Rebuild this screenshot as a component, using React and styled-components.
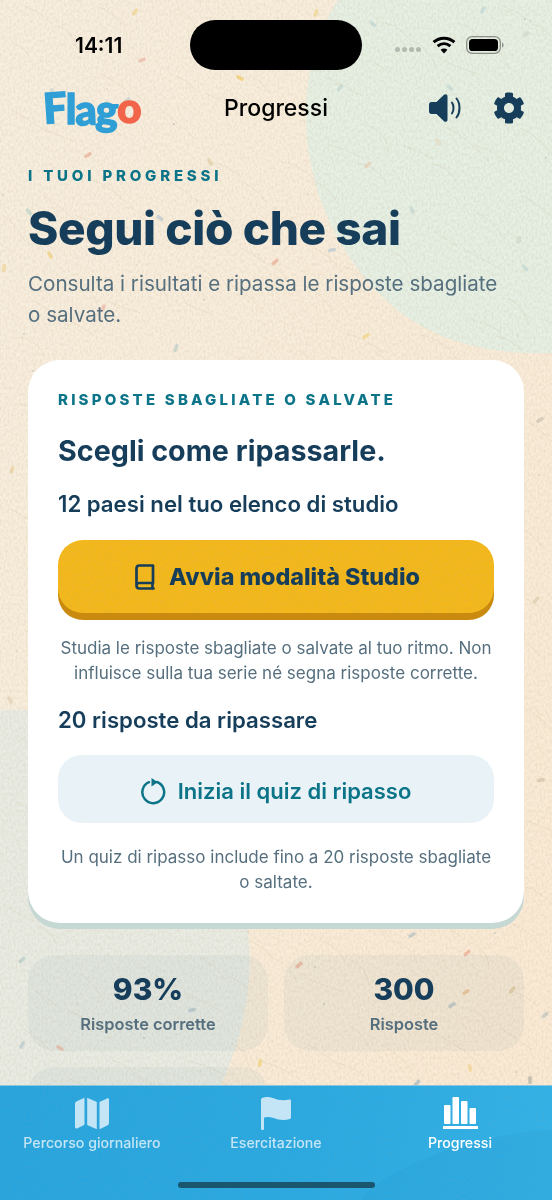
import React from 'react';
import styled, { createGlobalStyle } from 'styled-components';
import { FaCog } from 'react-icons/fa';

const GlobalStyle = createGlobalStyle`
  html, body {
    margin: 0;
    padding: 0;
    background: #f7e8d4;
  }
  * {
    box-sizing: border-box;
  }
`;

const navy = '#163d5a';
const teal = '#0c7488';
const slate = '#566f7e';

const Screen = styled.div`
  position: relative;
  width: 552px;
  height: 1200px;
  overflow: hidden;
  display: flex;
  flex-direction: column;
  font-family: Inter, 'Liberation Sans', sans-serif;
  color: ${navy};
`;

const PaperLayer = styled.svg`
  position: absolute;
  left: 0;
  top: 0;
  width: 552px;
  height: 1200px;
`;

const GrainOverlay = styled.svg`
  position: absolute;
  inset: 0;
  width: 100%;
  height: 100%;
  pointer-events: none;
`;

const StatusBar = styled.div`
  position: relative;
  height: 80px;
  flex: none;
  display: flex;
  align-items: center;
  justify-content: space-between;
  padding: 10px 48px 0 75px;
`;

const Clock = styled.span`
  font-size: 21px;
  font-weight: 600;
  color: #000;
`;

const Island = styled.div`
  position: absolute;
  left: 190px;
  top: 20px;
  width: 172px;
  height: 50px;
  border-radius: 25px;
  background: #000;
`;

const StatusIcons = styled.div`
  display: flex;
  align-items: center;
  gap: 10px;
`;

const SignalDots = styled.div`
  display: flex;
  gap: 2px;
  margin: 8px 1px 0 0;
`;

const Dot = styled.i`
  display: block;
  width: 5px;
  height: 5px;
  border-radius: 50%;
  background: #b4b9b0;
`;

const NavBar = styled.header`
  position: relative;
  flex: none;
  height: 56px;
  display: grid;
  grid-template-columns: 1fr auto 1fr;
  align-items: center;
  padding: 0 27px;
`;

const Logo = styled.div`
  display: flex;
  align-items: baseline;
  margin: -3px 0 0 16px;
  font-family: Lato, Inter, sans-serif;
  font-size: 42px;
  font-weight: 900;
  line-height: 1;
  letter-spacing: -1px;
  color: #2f9fd6;
  -webkit-text-stroke: 1.4px currentColor;
`;

const LogoLetter = styled.span`
  display: inline-block;
  color: ${p => p.$accent ? '#f2654a' : '#2f9fd6'};
  transform: translateY(${p => p.$lift || 0}px) rotate(${p => p.$tilt || 0}deg);
`;

const NavTitle = styled.h2`
  margin: 0;
  font-size: 23px;
  font-weight: 500;
  color: #000;
`;

const NavActions = styled.div`
  display: flex;
  align-items: center;
  justify-content: flex-end;
  gap: 31px;
  color: ${navy};
`;

const Content = styled.main`
  position: relative;
  flex: 1;
  min-height: 0;
  overflow: hidden;
  padding: 0 28px;
`;

const Eyebrow = styled.div`
  font-size: 15px;
  line-height: 18px;
  font-weight: 800;
  letter-spacing: ${p => p.$spacing}px;
  text-transform: uppercase;
  color: ${teal};
`;

const Intro = styled.section`
  padding-top: 31px;
`;

const Headline = styled.h1`
  margin: 14px 0 0;
  font-size: 46px;
  line-height: 58px;
  font-weight: 800;
  letter-spacing: -0.4px;
`;

const Lead = styled.p`
  margin: 11px 0 0;
  padding-right: 10px;
  font-size: 20.6px;
  line-height: 31px;
  color: ${slate};
`;

const Card = styled.section`
  margin-top: 30px;
  padding: 31px 30px 28px;
  border-radius: 32px;
  background: #fff;
  box-shadow: 0 6px 0 #c6d8d3;
`;

const CardTitle = styled.h3`
  margin: 24px 0 0;
  font-size: 28.7px;
  line-height: 36px;
  font-weight: 700;
`;

const CountLine = styled.div`
  margin-top: ${p => p.$top}px;
  font-size: 22.2px;
  line-height: 30px;
  font-weight: 600;
`;

const ActionButton = styled.button`
  position: relative;
  width: 100%;
  display: flex;
  align-items: center;
  justify-content: center;
  gap: ${p => p.$primary ? 14 : 12}px;
  margin-top: ${p => p.$primary ? 21 : 20}px;
  padding: ${p => p.$primary ? '0 0 0 3px' : '3px 0 0'};
  height: ${p => p.$primary ? 73 : 68}px;
  border: 0;
  border-radius: ${p => p.$primary ? 25 : 24}px;
  font-family: inherit;
  font-size: ${p => p.$primary ? 23.3 : 22}px;
  font-weight: ${p => p.$primary ? 800 : 600};
  color: ${p => p.$primary ? navy : teal};
  background: ${p => p.$primary ? '#f4b81a' : '#e9f2f6'};
  box-shadow: ${p => p.$primary ? '0 7px 0 #c98a0f' : 'none'};
`;

const ButtonTexture = styled.span`
  position: absolute;
  inset: 0;
  overflow: hidden;
  border-radius: 25px;
`;

const ButtonLabel = styled.span`
  position: relative;
`;

const HelpText = styled.p`
  margin: ${p => p.$top}px 0 0;
  font-size: 17px;
  line-height: 25px;
  text-align: center;
  color: ${slate};
`;

const StatGrid = styled.div`
  display: grid;
  grid-template-columns: 1fr 1fr;
  gap: 16px;
  margin-top: 32px;
`;

const StatCard = styled.div`
  height: 96px;
  padding-top: 15px;
  border-radius: 26px;
  text-align: center;
  background: rgba(70, 120, 135, 0.06);
`;

const StatValue = styled.div`
  font-size: 30px;
  line-height: 38px;
  font-weight: 800;
`;

const StatLabel = styled.div`
  margin-top: 6px;
  font-size: 16.4px;
  line-height: 20px;
  font-weight: 600;
  color: ${slate};
`;

const TabBar = styled.nav`
  position: relative;
  flex: none;
  height: 115px;
  overflow: hidden;
  border-top: 1px solid #8cc6dc;
  background: linear-gradient(100deg, #28a4dd 0%, #2aa8e0 55%, #33b1e6 100%);
`;

const TabWash = styled.svg`
  position: absolute;
  inset: 0;
  width: 100%;
  height: 100%;
`;

const TabRow = styled.div`
  position: relative;
  display: grid;
  grid-template-columns: 184px 184px 184px;
  padding-top: 10px;
`;

const Tab = styled.div`
  display: flex;
  flex-direction: column;
  align-items: center;
  gap: 4px;
  color: ${p => p.$active ? '#fff' : '#c4e5f5'};
  font-size: 14.2px;
  line-height: 18px;
  font-weight: 500;
`;

const TabIcon = styled.div`
  height: 34px;
  display: flex;
  align-items: center;
`;

const HomeIndicator = styled.div`
  position: absolute;
  left: 178px;
  bottom: 12px;
  width: 197px;
  height: 6px;
  border-radius: 3px;
  background: #1b566f;
`;

const BookSvg = styled.svg`
  position: relative;
`;

// paper flecks, picked by eye from the reference
const flecks = [
  [135, 12, '#f0cf78', 40], [142, 60, '#eba89a', 70], [240, 78, '#f2c542', -60], [316, 13, '#f0cf78', 20],
  [373, 24, '#b9d3d6', -50], [483, 10, '#b9d3d6', 30], [526, 34, '#c5d5c8', 60], [450, 88, '#b9d3d6', -55],
  [340, 88, '#b9d3d6', 45], [52, 92, '#b8cfd2', 0], [127, 100, '#b8c8cc', 60], [438, 142, '#e8d8b8', -40],
  [368, 165, '#ecc9a8', 50], [88, 155, '#ec9b80', 60], [210, 162, '#dcc898', -30], [29, 212, '#a8ccc4', -40],
  [160, 218, '#a8bfd0', -55], [50, 255, '#f0c860', -30], [275, 262, '#ec9b80', 50], [4, 268, '#f0d080', 10],
  [103, 308, '#eba89a', 30], [366, 336, '#f2d466', 60], [332, 250, '#a8bfd0', 80], [525, 268, '#b8d4d0', -40],
  [176, 348, '#a8c8c8', 20], [412, 210, '#b8d4d0', -20], [519, 240, '#c8d8c8', 10], [470, 285, '#ccd8c0', -20],
  [540, 420, '#c0b8a8', 60], [12, 470, '#e8c890', 20], [536, 600, '#d8c8a8', 40], [10, 700, '#d8c8a8', -30],
  [541, 780, '#c8b8a0', 80], [22, 960, '#a8c4c4', 50], [60, 1048, '#f0a888', -60], [22, 1045, '#a8c0cc', 30],
  [299, 965, '#e89878', 50], [412, 935, '#9fb3c0', 60], [467, 953, '#ec9b80', 50], [192, 1010, '#9fb8c8', 80],
  [466, 992, '#e8b070', 60], [545, 1015, '#b0bcc0', 50], [260, 1063, '#f2cf60', 10], [470, 1068, '#f2cf80', -10],
  [417, 1083, '#8fa8b8', 40], [530, 1080, '#98a098', 0], [512, 990, '#d8b888', 40], [452, 1005, '#98b0c0', 60],
];

const speckDots = Array.from({ length: 80 }, (_, i) => [
  (i * 97 + 31) % 552,
  (i * 211 + 17) % 1090,
  0.4 + (i % 3) * 0.25,
]);

const fibres = Array.from({ length: 240 }, (_, i) => {
  const x = (i * 139 + 11) % 552;
  const y = (i * 173 + 43) % 1090;
  return `M${x} ${y}q${10 + i % 9} ${2 + i % 7} ${18 + i % 20} ${12 + i % 16}`;
});

function PaperBackground() {
  return (
    <PaperLayer viewBox="0 0 552 1200" aria-hidden="true">
      <defs>
        <filter id="grain" x="0" y="0" width="100%" height="100%">
          <feTurbulence type="fractalNoise" baseFrequency="0.5 0.3" numOctaves="3" seed="8" />
          <feColorMatrix values="0 0 0 0 0.5  0 0 0 0 0.4  0 0 0 0 0.25  1.5 0 0 0 -0.55" />
        </filter>
        <linearGradient id="cream" x1="0" y1="0" x2="1" y2="1">
          <stop offset="0" stopColor="#f8efe0" />
          <stop offset="0.6" stopColor="#f9ecd9" />
          <stop offset="1" stopColor="#fbead4" />
        </linearGradient>
      </defs>
      <rect width="552" height="1200" fill="url(#cream)" />
      <path d="M338 0C318 30 306 70 306 115C306 190 340 265 400 312C440 342 490 355 552 353V0Z" fill="#e6f0e4" />
      <path d="M0 710H60C150 730 232 830 248 930C254 980 244 1040 218 1090H0Z" fill="#e9ece4" />
      <g fill="none" stroke="#c9b899" strokeWidth="0.6" opacity="0.36">
        {fibres.map((d, i) => <path key={i} d={d} />)}
      </g>
      <g fill="#8d9a9c" opacity="0.4">
        {speckDots.map(([x, y, r], i) => <circle key={i} cx={x} cy={y} r={r} />)}
      </g>
      <g opacity="0.55">
        {flecks.map(([x, y, c, a], i) => (
          <rect key={i} x={x - 1.8} y={y - 4} width="3.6" height="8" rx="1.6" fill={c} transform={`rotate(${a} ${x} ${y})`} />
        ))}
      </g>
      <rect width="552" height="1200" filter="url(#grain)" opacity="0.28" />
    </PaperLayer>
  );
}

function WifiIcon() {
  return (
    <svg width="24" height="18" viewBox="0 0 24 18" fill="none" stroke="#000" strokeWidth="3">
      <path d="M1.6 6.2C7.6 1 16.4 1 22.4 6.2" />
      <path d="M5.6 10.2C9.4 7 14.6 7 18.4 10.2" />
      <path d="M12 17.4L8.6 13.8C10.6 12.2 13.4 12.2 15.4 13.8Z" fill="#000" stroke="none" />
    </svg>
  );
}

function BatteryIcon() {
  return (
    <svg width="38" height="18" viewBox="0 0 38 18">
      <rect x="0.7" y="0.7" width="33.6" height="16.6" rx="5.4" fill="none" stroke="#8b8f88" strokeWidth="1.3" />
      <rect x="3" y="3" width="29" height="12" rx="3.6" fill="#000" />
      <path d="M36 6.5c1.2.4 1.6 1.4 1.6 2.5s-.4 2.100-1.600 2.500Z" fill="#8b8f88" />
    </svg>
  );
}

function SpeakerIcon() {
  return (
    <svg width="33" height="30" viewBox="0 0 33 30" fill={navy} stroke="none">
      <path d="M0 11.500C0 10 1 9 2.500 9H7.500L15 1.800C16.400 .5 18.500 1.300 18.500 3.300V26.700C18.500 28.700 16.400 29.500 15 28.200L7.500 21H2.500C1 21 0 20 0 18.500Z" />
      <path d="M23 9.500C25 12.500 25 17.500 23 20.500" fill="none" stroke={navy} strokeWidth="2" strokeLinecap="round" />
      <path d="M27.500 5.500C31.500 10.500 31.500 19.500 27.500 24.500" fill="none" stroke={navy} strokeWidth="2" strokeLinecap="round" />
    </svg>
  );
}

function BookIcon() {
  return (
    <BookSvg width="20" height="26" viewBox="0 0 20 26" fill="none" stroke={navy} strokeWidth="2.700" strokeLinejoin="round" strokeLinecap="round">
      <path d="M1.500 21.500V4.500C1.500 2.800 2.700 1.500 4.400 1.500H18V19H4.400C2.700 19 1.500 20 1.500 21.500C1.500 23.200 2.700 24.500 4.400 24.500H18.500" />
      <path d="M17.500 19V24" />
    </BookSvg>
  );
}

function ReloadIcon() {
  return (
    <svg width="25" height="28" viewBox="0 0 25 28" fill="none">
      <path d="M8 5.200A10.900 10.900 0 1 0 16 5" stroke={teal} strokeWidth="2.500" strokeLinecap="round" />
      <path d="M10.500 1L16.800 5.200L10.500 9.400Z" fill={teal} />
    </svg>
  );
}

function MapIcon() {
  return (
    <svg width="34" height="33" viewBox="0 0 34 33" fill="currentColor">
      <path d="M0 7C0 5.600 .6 4.800 1.800 4.200L9.500 .8V27.800L2 31.400C.9 31.900 0 31.300 0 30.100Z" />
      <path d="M12.200 .8L21.800 5V32.200L12.200 28Z" />
      <path d="M24.500 5L32 1.500C33.100 1 34 1.600 34 2.800V25.800C34 27.200 33.400 28 32.200 28.600L24.500 32.200Z" />
    </svg>
  );
}

function FlagIcon() {
  return (
    <svg width="30" height="33" viewBox="0 0 30 33" fill="currentColor">
      <path d="M0 2.500C0 1.800 .4 1.300 1 1C5 -.6 9 -.2 12.500 1.200C17 3 22 3.800 28.500 2.500C29.400 2.300 30 2.800 30 3.600V20.500C30 21.300 29.600 21.800 28.900 22C23 23.800 17.500 22.800 12.500 21C9 19.800 6 19.600 3 20.600V31.400C3 32.300 2.400 33 1.500 33C.6 33 0 32.300 0 31.400Z" />
    </svg>
  );
}

function BarsIcon() {
  return (
    <svg width="35" height="32" viewBox="0 0 35 32" fill="currentColor">
      <rect x="1" y="8" width="6.500" height="19" rx="1" />
      <rect x="9.500" y="0" width="6.500" height="27" rx="1" />
      <rect x="18" y="4" width="6.500" height="23" rx="1" />
      <rect x="26.500" y="11" width="6.500" height="16" rx="1" />
      <rect x="0" y="29" width="35" height="3" rx="0.500" />
    </svg>
  );
}

export default function App() {
  return (
    <Screen>
      <GlobalStyle />
      <PaperBackground />

      <StatusBar>
        <Clock>14:11</Clock>
        <Island />
        <StatusIcons>
          <SignalDots><Dot /><Dot /><Dot /><Dot /></SignalDots>
          <WifiIcon />
          <BatteryIcon />
        </StatusIcons>
      </StatusBar>

      <NavBar>
        <Logo>
          <LogoLetter $tilt={-4}>F</LogoLetter>
          <LogoLetter $lift={1}>l</LogoLetter>
          <LogoLetter $lift={2} $tilt={-3}>a</LogoLetter>
          <LogoLetter $lift={2} $tilt={3}>g</LogoLetter>
          <LogoLetter $accent>o</LogoLetter>
        </Logo>
        <NavTitle>Progressi</NavTitle>
        <NavActions>
          <SpeakerIcon />
          <FaCog size={32} />
        </NavActions>
      </NavBar>

      <Content>
        <Intro>
          <Eyebrow $spacing={3.8}>I tuoi progressi</Eyebrow>
          <Headline>Segui ciò che sai</Headline>
          <Lead>Consulta i risultati e ripassa le risposte sbagliate o salvate.</Lead>
        </Intro>

        <Card>
          <Eyebrow $spacing={3.2}>Risposte sbagliate o salvate</Eyebrow>
          <CardTitle>Scegli come ripassarle.</CardTitle>
          <CountLine $top={20}>12 paesi nel tuo elenco di studio</CountLine>
          <ActionButton $primary>
            <ButtonTexture>
              <GrainOverlay aria-hidden="true">
                <rect width="100%" height="100%" filter="url(#grain)" opacity="0.22" />
              </GrainOverlay>
            </ButtonTexture>
            <BookIcon />
            <ButtonLabel>Avvia modalità Studio</ButtonLabel>
          </ActionButton>
          <HelpText $top={23}>
            Studia le risposte sbagliate o salvate al tuo ritmo. Non influisce sulla tua serie né segna risposte corrette.
          </HelpText>
          <CountLine $top={19}>20 risposte da ripassare</CountLine>
          <ActionButton>
            <ReloadIcon />
            Inizia il quiz di ripasso
          </ActionButton>
          <HelpText $top={22}>
            Un quiz di ripasso include fino a 20 risposte sbagliate o saltate.
          </HelpText>
        </Card>

        <StatGrid>
          <StatCard>
            <StatValue>93%</StatValue>
            <StatLabel>Risposte corrette</StatLabel>
          </StatCard>
          <StatCard>
            <StatValue>300</StatValue>
            <StatLabel>Risposte</StatLabel>
          </StatCard>
          <StatCard />
        </StatGrid>
      </Content>

      <TabBar>
        <TabWash viewBox="0 0 552 115" preserveAspectRatio="none" aria-hidden="true">
          <path d="M360 115C390 80 470 50 552 44V115Z" fill="#2394cc" opacity="0.18" />
          <rect width="552" height="115" filter="url(#grain)" opacity="0.1" />
        </TabWash>
        <TabRow>
          <Tab>
            <TabIcon><MapIcon /></TabIcon>
            Percorso giornaliero
          </Tab>
          <Tab>
            <TabIcon><FlagIcon /></TabIcon>
            Esercitazione
          </Tab>
          <Tab $active>
            <TabIcon><BarsIcon /></TabIcon>
            Progressi
          </Tab>
        </TabRow>
        <HomeIndicator />
      </TabBar>
    </Screen>
  );
}
